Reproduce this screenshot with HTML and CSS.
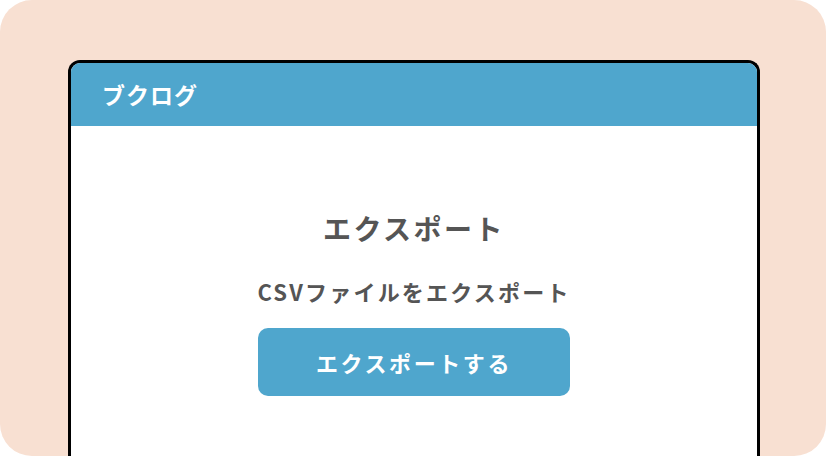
FILE: index.html
```html
<!DOCTYPE html>
<html lang="ja">
<head>
<meta charset="utf-8">
<link rel="stylesheet" href="styles.css">
</head>
<body>
<div class="stage">
  <div class="window">
    <div class="header">ブクログ</div>
    <div class="content">
      <h1 class="title">エクスポート</h1>
      <p class="subtitle">CSVファイルをエクスポート</p>
      <button class="btn">エクスポートする</button>
    </div>
  </div>
</div>
</body>
</html>
```
FILE: styles.css
```css
html, body {
  margin: 0;
  padding: 0;
  background: #ffffff;
}
body {
  font-family: "Noto Sans CJK JP", "Noto Sans", sans-serif;
  font-weight: 700;
}
.stage {
  width: 826px;
  height: 456px;
  box-sizing: border-box;
  background: #f8e0d2;
  border-radius: 32px;
  padding: 60px 0 0 68px;
  overflow: hidden;
}
.window {
  width: 692px;
  height: 420px;
  box-sizing: border-box;
  border: 3px solid #000;
  border-bottom: none;
  border-radius: 12px 12px 0 0;
  background: #fff;
  overflow: hidden;
}
.header {
  height: 63px;
  background: #4fa6cd;
  color: #fff;
  font-size: 23px;
  line-height: 63px;
  padding-left: 31px;
  letter-spacing: 1px;
}
.content {
  display: flex;
  flex-direction: column;
  align-items: center;
  padding-top: 82px;
}
.title {
  margin: 0;
  font-size: 28px;
  line-height: 40px;
  color: #555;
  letter-spacing: 2.5px;
}
.subtitle {
  margin: 28px 0 0;
  font-size: 22px;
  line-height: 30px;
  color: #555;
  letter-spacing: 2.2px;
}
.btn {
  margin-top: 22px;
  width: 312px;
  height: 68px;
  border: none;
  border-radius: 10px;
  background: #4fa6cd;
  color: #fff;
  font-family: inherit;
  font-weight: 700;
  font-size: 22px;
  letter-spacing: 2.6px;
  padding: 0;
}
```
